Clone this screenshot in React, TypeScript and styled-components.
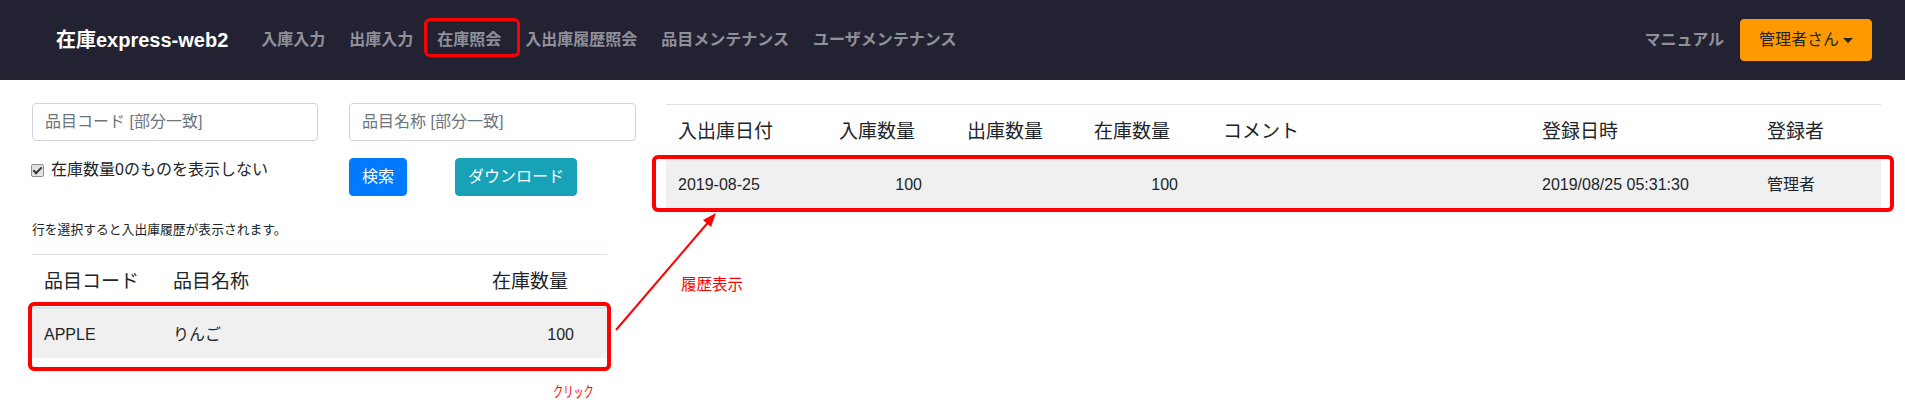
import React from "react";
import styled, { createGlobalStyle, css } from "styled-components";

const GlobalStyle = createGlobalStyle`
  * { box-sizing: border-box; }
  html, body { margin: 0; padding: 0; background: #fff; }
  body {
    font-family: "Liberation Sans", "Noto Sans CJK JP", sans-serif;
    font-size: 16px;
    line-height: 1.5;
    color: #212529;
  }
`;

const Page = styled.div`
  position: relative;
  width: 1905px;
  height: 411px;
  overflow: hidden;
`;

/* ---------- navbar ---------- */
const NavBar = styled.nav`
  height: 80px;
  background: #222232;
  display: flex;
  align-items: center;
  padding: 0 33px 0 56px;
`;

const Brand = styled.div`
  color: #fff;
  font-weight: 700;
  font-size: 20px;
  line-height: 30px;
  margin-right: 21px;
  white-space: nowrap;
`;

const NavList = styled.div`
  display: flex;
  align-items: center;
  flex: 1;
`;

const NavLink = styled.span`
  color: rgba(255, 255, 255, 0.5);
  font-weight: 700;
  font-size: 16px;
  line-height: 24px;
  padding: 0 12px;
  white-space: nowrap;
`;

const NavRight = styled.div`
  display: flex;
  align-items: center;
  gap: 16px;
`;

const PlainNavLink = styled(NavLink)`
  padding: 0;
`;

const UserButton = styled.button`
  height: 42px;
  padding: 0 18px;
  border: 1px solid #ff9900;
  border-radius: 4px;
  background: #ff9900;
  color: #212529;
  font-family: inherit;
  font-size: 16px;
  line-height: 24px;
  display: inline-flex;
  align-items: center;
`;

const Caret = styled.span`
  display: inline-block;
  margin-left: 4px;
  border-top: 5px solid #212529;
  border-left: 5px solid transparent;
  border-right: 5px solid transparent;
`;

/* ---------- main ---------- */
const Main = styled.div`
  display: flex;
  padding: 23px 24px 0 32px;
  gap: 30px;
`;

const LeftCol = styled.div`
  width: 604px;
  flex: none;
`;

const RightCol = styled.div`
  flex: 1;
  margin-top: 1px;
`;

const SearchForm = styled.div`
  display: grid;
  grid-template-columns: 286px 287px;
  column-gap: 31px;
  row-gap: 17px;
`;

const TextInput = styled.input`
  height: 38px;
  width: 100%;
  padding: 6px 12px;
  border: 1px solid #ced4da;
  border-radius: 4px;
  font-family: inherit;
  font-size: 16px;
  color: #495057;
  background: #fff;
  &::placeholder { color: #6c757d; }
`;

const CheckLabel = styled.label`
  display: flex;
  align-items: center;
  gap: 7px;
  height: 24px;
  font-size: 16px;
  line-height: 24px;
  margin-left: -1px;
  align-self: start;
`;

const CheckBox = styled.input`
  appearance: none;
  width: 13px;
  height: 13px;
  margin: 0;
  border: 1px solid #8f8f8f;
  border-radius: 2px;
  background: #e3e3e3;
  position: relative;
  &::after {
    content: "";
    position: absolute;
    left: 3px;
    top: 0px;
    width: 3px;
    height: 7px;
    border-right: 2px solid #333;
    border-bottom: 2px solid #333;
    transform: rotate(45deg);
  }
`;

const ButtonRow = styled.div`
  display: flex;
  gap: 48px;
`;

const Btn = styled.button<{ $variant: "primary" | "info" }>`
  height: 38px;
  padding: 0 12px;
  border-radius: 4px;
  font-family: inherit;
  font-size: 16px;
  line-height: 24px;
  color: #fff;
  ${(p) =>
    p.$variant === "primary"
      ? css`background: #007bff; border: 1px solid #007bff;`
      : css`background: #17a2b8; border: 1px solid #17a2b8;`}
`;

const Hint = styled.div`
  font-size: 12.8px;
  line-height: 19px;
  margin: 24px 0 15px;
`;

/* ---------- tables ---------- */
const Table = styled.div<{ $width?: string }>`
  width: ${(p) => p.$width ?? "100%"};
  border-top: 1px solid #dee2e6;
`;

const HeadRow = styled.div<{ $cols: string }>`
  display: grid;
  grid-template-columns: ${(p) => p.$cols};
  height: 54px;
  padding-top: 2px;
  align-items: center;
  border-bottom: 2px solid #dee2e6;
`;

const Th = styled.div`
  padding: 0 12px;
  font-size: 19px;
  font-weight: 400;
  line-height: 28px;
  white-space: nowrap;
`;

const BodyRow = styled.div<{ $cols: string }>`
  display: grid;
  grid-template-columns: ${(p) => p.$cols};
  height: 49px;
  padding-top: 2px;
  align-items: center;
  background: #f0f0f0;
`;

const Td = styled.div<{ $num?: boolean }>`
  padding: ${(p) => (p.$num ? "0 33px 0 12px" : "0 12px")};
  text-align: ${(p) => (p.$num ? "right" : "left")};
  font-size: 16px;
  line-height: 24px;
  white-space: nowrap;
`;

/* ---------- annotations (overlay) ---------- */
const MarkBox = styled.div<{ $w: number }>`
  position: absolute;
  border: ${(p) => p.$w}px solid #ff0000;
  border-radius: 6px;
  pointer-events: none;
`;

const Overlay = styled.svg`
  position: absolute;
  left: 0;
  top: 0;
  pointer-events: none;
`;

const Note = styled.span`
  position: absolute;
  color: #ff0000;
  font-family: "Noto Sans CJK JP", sans-serif;
  white-space: nowrap;
`;

const HistoryNote = styled(Note)`
  font-size: 15.5px;
  line-height: 20px;
`;

const ClickNote = styled(Note)`
  font-size: 15px;
  line-height: 20px;
  transform: scaleX(0.68);
  transform-origin: left center;
`;

const leftCols = "129px 319px 127px";
const rightCols = "161px 128px 127px 129px 319px 225px 126px";

const navItems = ["入庫入力", "出庫入力", "在庫照会", "入出庫履歴照会", "品目メンテナンス", "ユーザメンテナンス"];

export default function App() {
  return (
    <>
      <GlobalStyle />
      <Page>
        <NavBar>
          <Brand>在庫express-web2</Brand>
          <NavList>
            {navItems.map((n) => (
              <NavLink key={n}>{n}</NavLink>
            ))}
          </NavList>
          <NavRight>
            <PlainNavLink>マニュアル</PlainNavLink>
            <UserButton>
              管理者さん
              <Caret />
            </UserButton>
          </NavRight>
        </NavBar>

        <Main>
          <LeftCol>
            <SearchForm>
              <TextInput placeholder="品目コード [部分一致]" />
              <TextInput placeholder="品目名称 [部分一致]" />
              <CheckLabel>
                <CheckBox type="checkbox" defaultChecked />
                在庫数量0のものを表示しない
              </CheckLabel>
              <ButtonRow>
                <Btn $variant="primary">検索</Btn>
                <Btn $variant="info">ダウンロード</Btn>
              </ButtonRow>
            </SearchForm>
            <Hint>行を選択すると入出庫履歴が表示されます。</Hint>
            <Table $width="575px">
              <HeadRow $cols={leftCols}>
                <Th>品目コード</Th>
                <Th>品目名称</Th>
                <Th>在庫数量</Th>
              </HeadRow>
              <BodyRow $cols={leftCols}>
                <Td>APPLE</Td>
                <Td>りんご</Td>
                <Td $num>100</Td>
              </BodyRow>
            </Table>
          </LeftCol>

          <RightCol>
            <Table>
              <HeadRow $cols={rightCols}>
                <Th>入出庫日付</Th>
                <Th>入庫数量</Th>
                <Th>出庫数量</Th>
                <Th>在庫数量</Th>
                <Th>コメント</Th>
                <Th>登録日時</Th>
                <Th>登録者</Th>
              </HeadRow>
              <BodyRow $cols={rightCols}>
                <Td>2019-08-25</Td>
                <Td $num>100</Td>
                <Td $num></Td>
                <Td $num>100</Td>
                <Td></Td>
                <Td>2019/08/25 05:31:30</Td>
                <Td>管理者</Td>
              </BodyRow>
            </Table>
          </RightCol>
        </Main>

        <MarkBox $w={3} style={{ left: 424, top: 18, width: 96, height: 39 }} />
        <MarkBox $w={4} style={{ left: 28, top: 302, width: 583, height: 69 }} />
        <MarkBox $w={4} style={{ left: 652, top: 155, width: 1242, height: 57 }} />

        <Overlay width={1905} height={411} viewBox="0 0 1905 411">
          <line x1={616} y1={330} x2={711} y2={219} stroke="#ff0000" strokeWidth={2} />
          <polygon points="716,213 703,220 711,227" fill="#ff0000" />
        </Overlay>
        <HistoryNote style={{ left: 681, top: 273 }}>履歴表示</HistoryNote>
        <ClickNote style={{ left: 553, top: 381 }}>クリック</ClickNote>
      </Page>
    </>
  );
}
